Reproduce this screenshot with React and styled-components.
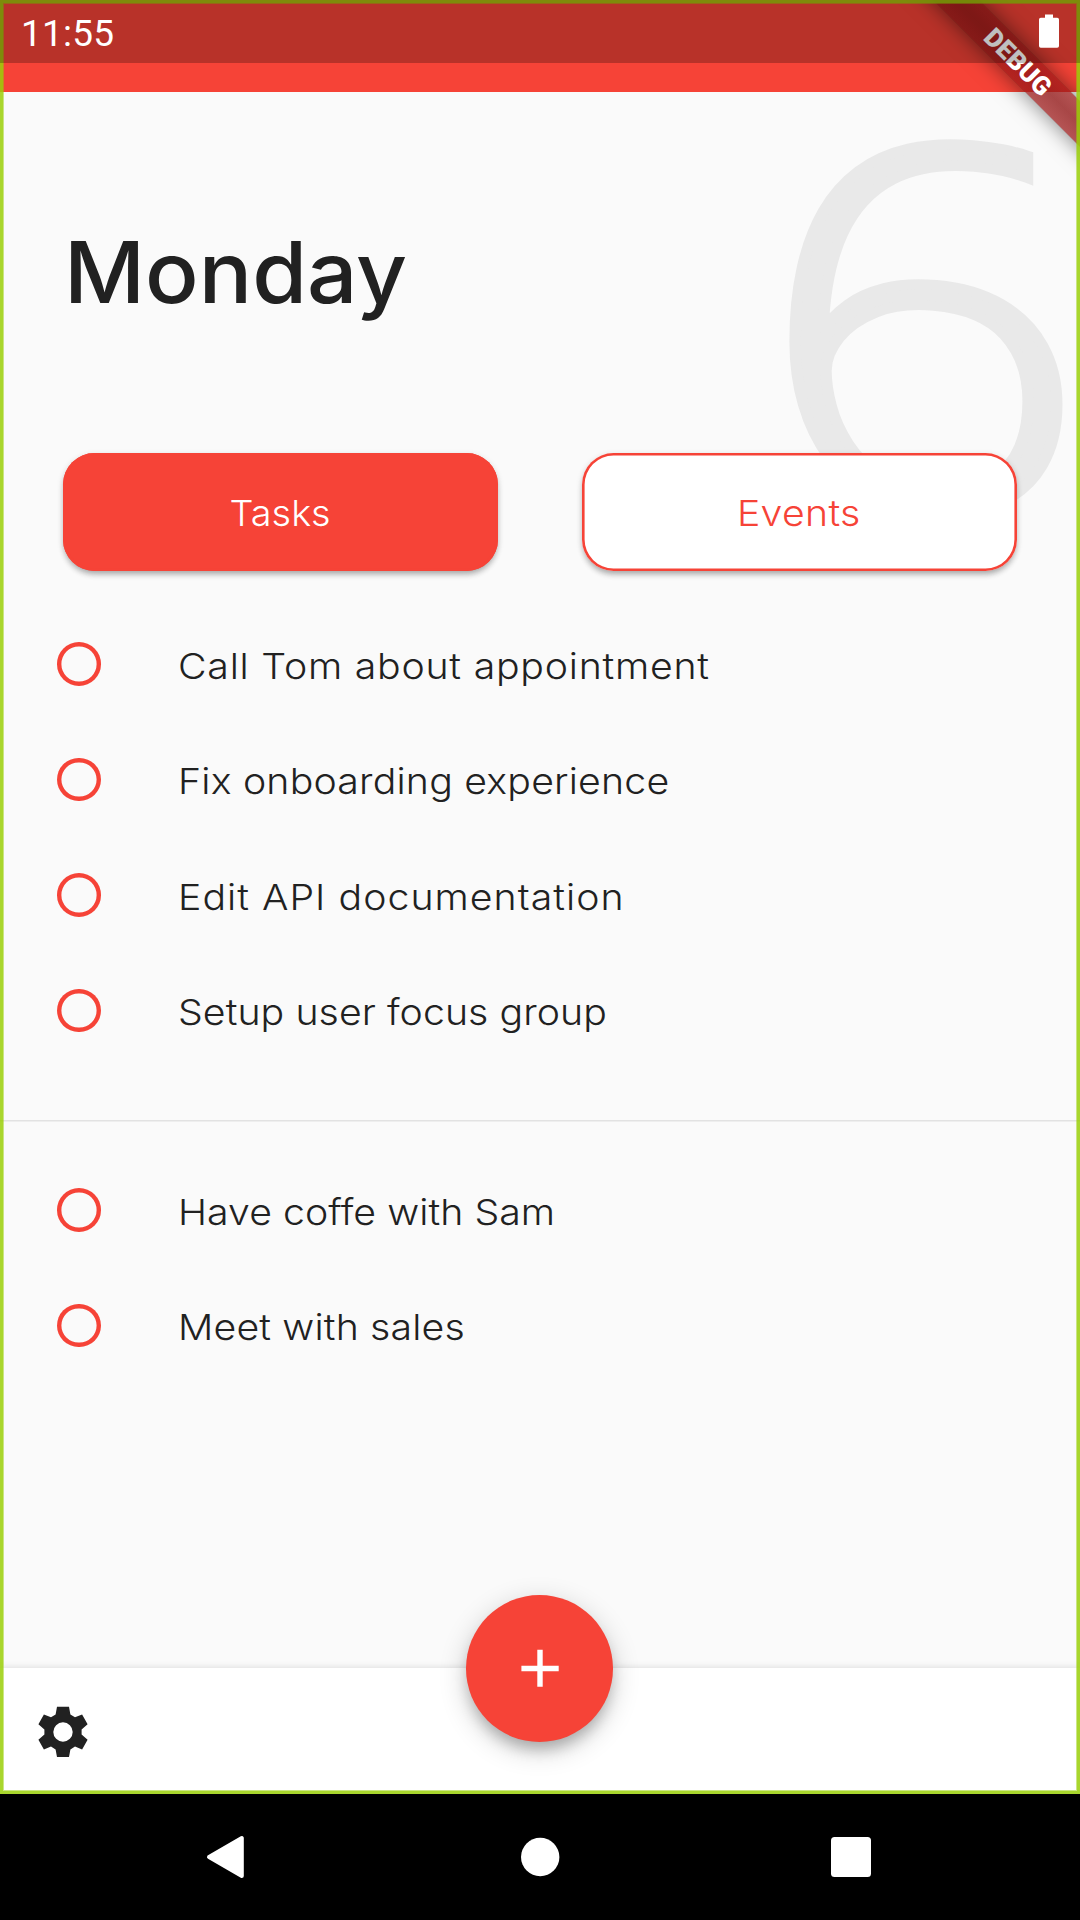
import React from "react";
import styled, { createGlobalStyle } from "styled-components";

const RED = "#f64337";
const INK = "#212121";

const GlobalStyle = createGlobalStyle`
  *, *::before, *::after { box-sizing: border-box; }
  body {
    margin: 0;
    background: #000;
    font-family: Inter, "Open Sans", "Liberation Sans", sans-serif;
    color: ${INK};
  }
`;

const Device = styled.div`
  width: 1080px;
  height: 1920px;
  display: flex;
  flex-direction: column;
  overflow: hidden;
`;

const Screen = styled.div`
  position: relative;
  height: 1794px;
  display: flex;
  flex-direction: column;
  background: #fafafa;
  overflow: hidden;
`;

const AppBar = styled.header`
  flex: none;
  height: 91.75px;
  background: ${RED};
`;

const Content = styled.main`
  flex: 1;
  display: flex;
  flex-direction: column;
`;

const DayNumber = styled.span`
  position: absolute;
  top: 68px;
  left: 779px;
  font: 300 505px/487px "Open Sans", "Noto Sans", sans-serif;
  color: #e9e9e9;
  -webkit-text-stroke: 10px #e9e9e9;
  transform: skewY(5deg) scaleX(1.14);
  white-space: nowrap;
`;

const Label = styled.span`
  display: inline-block;
  white-space: nowrap;
  letter-spacing: ${(p) => p.$spacing || 0}px;
  transform: scaleX(${(p) => p.$stretch || 1.09});
  transform-origin: ${(p) => p.$origin || "left"} center;
`;

const DayTitle = styled.h1`
  position: relative;
  margin: 0;
  padding: 129px 64px 0;
  height: 360.75px;
  font-size: 85px;
  line-height: 104px;
  font-weight: 500;
`;

const Tabs = styled.nav`
  position: relative;
  display: flex;
  gap: 84px;
  padding: 0 63px;
`;

const Tab = styled.button`
  flex: 1;
  height: 118.25px;
  padding: 3px 1px 0 0;
  border: 0;
  border-radius: 31.5px;
  background: ${(p) => (p.$active ? RED : "#fff")};
  color: ${(p) => (p.$active ? "#fff" : RED)};
  font: 300 36px/48px Inter, "Open Sans", sans-serif;
  box-shadow: inset 0 0 0 2.6px ${RED}, 0 5px 6px -2px rgba(0, 0, 0, 0.24),
    0 2px 6px rgba(0, 0, 0, 0.16);
`;

const TaskList = styled.ul`
  list-style: none;
  margin: 0;
  padding: ${(p) => p.$top}px 57px ${(p) => p.$bottom || 0}px;
`;

const TaskRow = styled.li`
  display: flex;
  align-items: center;
  gap: 77px;
  height: 115.5px;
  font-size: 36px;
  line-height: 44px;
  font-weight: 300;
`;

const Ring = styled.span`
  flex: none;
  width: 43.75px;
  height: 43.75px;
  border-radius: 50%;
  box-shadow: inset 0 0 0 4.4px ${RED};
`;

const TaskText = styled.span`
  padding-top: 3px;
`;

const Divider = styled.hr`
  width: 100%;
  height: 2px;
  margin: 0;
  border: 0;
  background: linear-gradient(#e2e2e2 50%, #eeeeee 50%);
`;

const BottomBar = styled.footer`
  flex: none;
  height: 126px;
  padding: 2px 0 0 37px;
  display: flex;
  align-items: center;
  background: #fff;
  box-shadow: 0 0 7px rgba(0, 0, 0, 0.14);
`;

const Fab = styled.button`
  position: absolute;
  left: 466px;
  top: 1594.5px;
  width: 147px;
  height: 147px;
  padding: 0 0 0 1px;
  border: 0;
  border-radius: 50%;
  display: grid;
  place-items: center;
  background: ${RED};
  box-shadow: 0 10px 14px -3px rgba(0, 0, 0, 0.22), 0 8px 28px rgba(0, 0, 0, 0.2);
`;

const Ribbon = styled.div`
  position: absolute;
  left: 867.5px;
  top: 46px;
  width: 300px;
  height: 32px;
  display: grid;
  place-items: center;
  transform: rotate(45deg);
  font: 900 26px/31px Roboto, sans-serif;
  color: #fff;
  background: linear-gradient(rgba(183, 28, 28, 0.627), rgba(183, 28, 28, 0.627)),
    linear-gradient(rgba(0, 0, 0, 0.29), rgba(0, 0, 0, 0.43) 50%, rgba(0, 0, 0, 0.29));
  box-shadow: 0 0 21px rgba(0, 0, 0, 0.5);
`;

const Frame = styled.div`
  position: absolute;
  inset: 0;
  border: 3px solid rgba(154, 207, 8, 0.85);
  box-shadow: inset 0 0 0 1px rgba(154, 207, 8, 0.5);
`;

const StatusBar = styled.div`
  position: absolute;
  inset: 0 0 auto;
  height: 63px;
  padding: 13.5px 21px 0 21px;
  display: flex;
  justify-content: space-between;
  align-items: flex-start;
  background: rgba(0, 0, 0, 0.25);
  color: #fff;
  font: 400 37px/40px Roboto, sans-serif;
`;

const NavBar = styled.div`
  height: 126px;
  padding: 0 208.5px 0 205px;
  display: flex;
  justify-content: space-between;
  align-items: center;
  background: #000;
`;

const Clock = styled.span`
  letter-spacing: 0.2px;
`;

const upcoming = [
  { text: "Call Tom about appointment", spacing: 0.7 },
  { text: "Fix onboarding experience", spacing: 0.18 },
  { text: "Edit API documentation", spacing: 0.94 },
  { text: "Setup user focus group", spacing: 0.06 },
];

const later = [
  { text: "Have coffe with Sam", spacing: 0.04 },
  { text: "Meet with sales", spacing: 0.14 },
];

const Task = ({ text, spacing }) => (
  <TaskRow>
    <Ring />
    <TaskText>
      <Label $spacing={spacing}>{text}</Label>
    </TaskText>
  </TaskRow>
);

const GearIcon = () => (
  <svg width="52" height="52" viewBox="0 0 52 52">
    <path
      fill={INK}
      fillRule="evenodd"
      d="M20 .8h12l1.400 7.600 4.600 2.900 7.100-2.900 5.500 9.800-6 5.300v5l6 5.200-5.500 9.700-7.100-2.900-4.600 2.900-1.400 7.600H20l-1.400-7.600-4.600-2.900-7.100 2.900-5.500-9.700 6-5.200v-5l-6-5.300L6.900 8.400l7.100 2.900 4.600-2.900zM26 16.300a9.700 9.700 0 1 0 0 19.400a9.700 9.700 0 1 0 0-19.400z"
    />
  </svg>
);

const PlusIcon = () => (
  <svg width="38" height="38" viewBox="0 0 38 38">
    <path fill="#fff" d="M16.300 .8h5.400v16h16v5.400h-16v15.600h-5.400V22.200H.4v-5.400h15.900z" />
  </svg>
);

const BatteryIcon = () => (
  <svg width="20" height="34" viewBox="0 0 20 34">
    <path
      fill="#fff"
      d="M6 .5h8v3.200h4.200q1.800 0 1.800 1.800v26.500q0 1.800-1.800 1.800H1.800Q0 33.800 0 32V5.500q0-1.800 1.800-1.800H6z"
    />
  </svg>
);

const BackIcon = () => (
  <svg width="40" height="44" viewBox="0 0 40 44">
    <path
      fill="#fff"
      stroke="#fff"
      strokeWidth="4"
      strokeLinejoin="round"
      d="M4 22L36.800 3v38z"
    />
  </svg>
);

const HomeIcon = () => (
  <svg width="44" height="40" viewBox="0 0 44 40">
    <circle cx="24.200" cy="20" r="19.200" fill="#fff" />
  </svg>
);

const RecentsIcon = () => (
  <svg width="41" height="40" viewBox="0 0 41 40">
    <rect x="0" y="0" width="40" height="40" rx="3.500" fill="#fff" />
  </svg>
);

export default function App() {
  return (
    <Device>
      <GlobalStyle />
      <Screen>
        <AppBar />
        <Content>
          <DayNumber>6</DayNumber>
          <DayTitle>
            <Label $stretch={1.045}>Monday</Label>
          </DayTitle>
          <Tabs>
            <Tab $active>
              <Label $stretch={1.05} $origin="center">Tasks</Label>
            </Tab>
            <Tab>
              <Label $spacing={0.3} $origin="center">Events</Label>
            </Tab>
          </Tabs>
          <TaskList $top={35.5} $bottom={51.75}>
            {upcoming.map((t) => (
              <Task key={t.text} {...t} />
            ))}
          </TaskList>
          <Divider />
          <TaskList $top={30.25}>
            {later.map((t) => (
              <Task key={t.text} {...t} />
            ))}
          </TaskList>
        </Content>
        <BottomBar>
          <GearIcon />
        </BottomBar>
        <Fab>
          <PlusIcon />
        </Fab>
        <Ribbon>DEBUG</Ribbon>
        <Frame />
        <StatusBar>
          <Clock>11:55</Clock>
          <BatteryIcon />
        </StatusBar>
      </Screen>
      <NavBar>
        <BackIcon />
        <HomeIcon />
        <RecentsIcon />
      </NavBar>
    </Device>
  );
}
